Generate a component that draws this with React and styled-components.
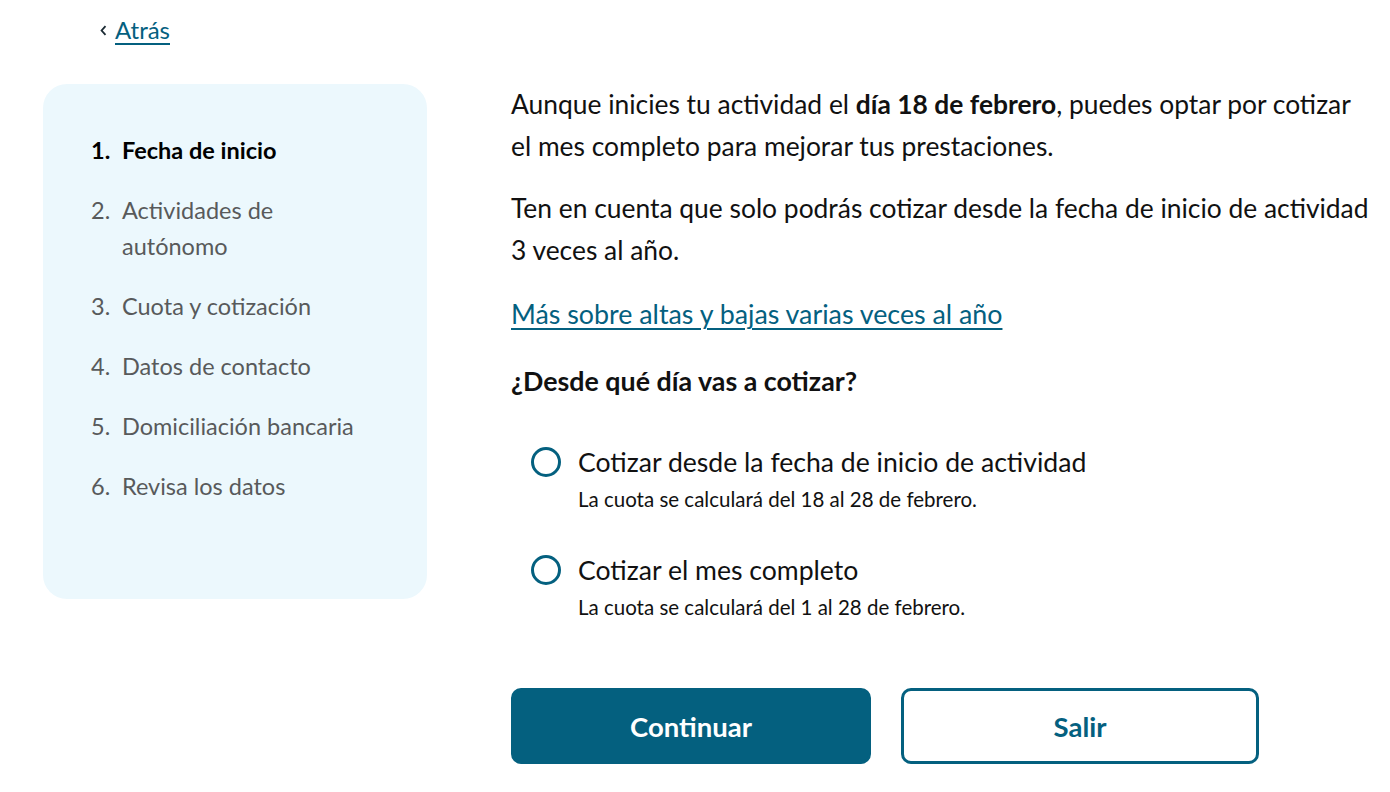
import React from "react";
import styled, { createGlobalStyle } from "styled-components";

const GlobalStyle = createGlobalStyle`
  body {
    margin: 0;
    background: #ffffff;
    font-family: Lato, "Noto Sans", sans-serif;
    color: #111111;
  }
  * { box-sizing: border-box; }
`;

const Page = styled.div`
  padding: 0 15px 0 43px;
`;

const TopBar = styled.div`
  height: 84px;
  padding: 12px 0 0 57px;
`;

const BackLink = styled.a`
  display: inline-flex;
  align-items: center;
  gap: 8px;
  font-size: 24px;
  line-height: 36px;
  color: #04607f;
  text-decoration: underline;
  text-underline-offset: 4px;
  text-decoration-thickness: 2px;
  cursor: pointer;
`;

const Layout = styled.div`
  display: grid;
  grid-template-columns: 384px 1fr;
  column-gap: 84px;
  align-items: start;
`;

const Sidebar = styled.nav`
  background: #ecf8fd;
  border-radius: 24px;
  padding: 48px 48px 95px 48px;
`;

const Steps = styled.ol`
  list-style: none;
  margin: 0;
  padding: 0;
  display: flex;
  flex-direction: column;
  gap: 24px;
`;

const Step = styled.li`
  display: grid;
  grid-template-columns: 31px 1fr;
  font-size: 23.5px;
  line-height: 36px;
  color: ${(p) => (p.$active ? "#000000" : "#585a5b")};
  font-weight: ${(p) => (p.$active ? 700 : 400)};
`;

const Main = styled.main`
  min-width: 0;
`;

const Paragraph = styled.p`
  margin: 0 0 21px;
  font-size: 26.4px;
  line-height: 41.5px;
  color: #111111;
`;

const TextLink = styled.a`
  display: block;
  margin-top: 23px;
  font-size: 26.8px;
  line-height: 41.5px;
  color: #04607f;
  text-decoration: underline;
  text-underline-offset: 4px;
  text-decoration-thickness: 2px;
  cursor: pointer;
`;

const Question = styled.h2`
  margin: 25px 0 0;
  font-size: 26.8px;
  line-height: 41.5px;
  font-weight: 700;
  color: #111111;
`;

const Options = styled.div`
  display: flex;
  flex-direction: column;
  gap: 42.5px;
  padding: 45px 0 0 20px;
`;

const Option = styled.label`
  display: grid;
  grid-template-columns: 30px 1fr;
  column-gap: 17px;
  cursor: pointer;
`;

const Radio = styled.span`
  width: 30px;
  height: 30px;
  border-radius: 50%;
  border: 3px solid #04607f;
`;

const OptionText = styled.div`
  display: flex;
  flex-direction: column;
`;

const OptionLabel = styled.span`
  font-size: 26.6px;
  line-height: 30px;
  color: #111111;
`;

const OptionHint = styled.span`
  font-size: 20.5px;
  line-height: 27px;
  margin-top: 8.5px;
  color: #111111;
`;

const Actions = styled.div`
  display: flex;
  gap: 30px;
  margin-top: 67.5px;
`;

const Button = styled.button`
  width: ${(p) => (p.$secondary ? "358px" : "360px")};
  height: 76px;
  border-radius: 10px;
  border: 3px solid #04607f;
  background: ${(p) => (p.$secondary ? "#ffffff" : "#04607f")};
  color: ${(p) => (p.$secondary ? "#04607f" : "#ffffff")};
  font-family: Lato, "Noto Sans", sans-serif;
  font-size: 27.5px;
  font-weight: 700;
  cursor: pointer;
`;

const steps = [
  "Fecha de inicio",
  "Actividades de autónomo",
  "Cuota y cotización",
  "Datos de contacto",
  "Domiciliación bancaria",
  "Revisa los datos",
];

const options = [
  {
    label: "Cotizar desde la fecha de inicio de actividad",
    hint: "La cuota se calculará del 18 al 28 de febrero.",
  },
  {
    label: "Cotizar el mes completo",
    hint: "La cuota se calculará del 1 al 28 de febrero.",
  },
];

const Chevron = () => (
  <svg width="7" height="11" viewBox="0 0 7 11" fill="none">
    <path d="M5.5 1.2L1.6 5.5l3.9 4.3" stroke="#1b2a33" strokeWidth="1.8" />
  </svg>
);

export default function App() {
  return (
    <>
      <GlobalStyle />
      <Page>
        <TopBar>
          <BackLink>
            <Chevron />
            Atrás
          </BackLink>
        </TopBar>
        <Layout>
          <Sidebar>
            <Steps>
              {steps.map((s, i) => (
                <Step key={s} $active={i === 0}>
                  <span>{i + 1}.</span>
                  <span>{s}</span>
                </Step>
              ))}
            </Steps>
          </Sidebar>
          <Main>
            <Paragraph>
              Aunque inicies tu actividad el <b>día 18 de febrero</b>, puedes
              optar por cotizar el mes completo para mejorar tus prestaciones.
            </Paragraph>
            <Paragraph>
              Ten en cuenta que solo podrás cotizar desde la fecha de inicio de
              actividad 3 veces al año.
            </Paragraph>
            <TextLink>Más sobre altas y bajas varias veces al año</TextLink>
            <Question>¿Desde qué día vas a cotizar?</Question>
            <Options>
              {options.map((o) => (
                <Option key={o.label}>
                  <Radio />
                  <OptionText>
                    <OptionLabel>{o.label}</OptionLabel>
                    <OptionHint>{o.hint}</OptionHint>
                  </OptionText>
                </Option>
              ))}
            </Options>
            <Actions>
              <Button>Continuar</Button>
              <Button $secondary>Salir</Button>
            </Actions>
          </Main>
        </Layout>
      </Page>
    </>
  );
}
